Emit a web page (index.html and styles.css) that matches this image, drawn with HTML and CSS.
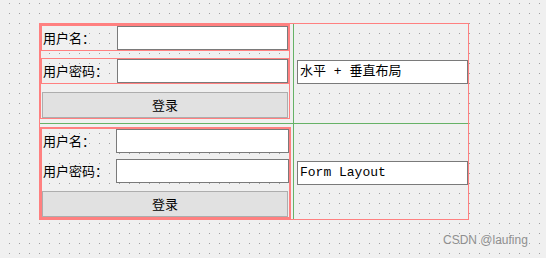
FILE: index.html
```html
<!DOCTYPE html>
<html>
<head>
<meta charset="utf-8">
<link rel="stylesheet" href="styles.css">
</head>
<body>
<div class="frame">
  <div class="cell tl">
    <div class="vbox">
      <div class="hrow"><span class="lbl">用户名：</span><div class="field"></div></div>
      <div class="hrow r2"><span class="lbl">用户密码：</span><div class="field"></div></div>
      <div class="btn">登录</div>
    </div>
  </div>
  <div class="cell tr"><div class="field wide t1">水平 + 垂直布局</div></div>
  <div class="cell bl">
    <div class="form">
      <div class="frow"><span class="lbl">用户名：</span><div class="field f2"></div></div>
      <div class="frow fr2"><span class="lbl">用户密码：</span><div class="field f2"></div></div>
      <div class="btn fbtn">登录</div>
    </div>
  </div>
  <div class="cell br"><div class="field wide t2">Form Layout</div></div>
</div>
<div class="wm">CSDN @laufing</div>
</body>
</html>
```

FILE: styles.css
```css
html, body {
  margin: 0;
  height: 100%;
}
body {
  background-color: #f0f0f0;
  background-image:
    linear-gradient(90deg, #f0f0f0 9px, transparent 9px),
    linear-gradient(#f0f0f0 9px, #a0a0a0 9px);
  background-size: 10px 10px;
  background-position: 0 -6px;
  font-family: "Liberation Mono", "Noto Sans CJK SC", monospace;
  font-size: 13px;
  color: #000;
  position: relative;
  overflow: hidden;
}
.frame {
  margin: 23px 0 0 39px;
  width: 430px;
  height: 197px;
  box-sizing: border-box;
  border: 1px solid #ff8080;
  display: grid;
  grid-template-columns: 253px 175px;
  grid-template-rows: 99px 96px;
}
.cell {
  box-sizing: border-box;
  min-width: 0;
}
.tr, .br {
  border-left: 1px solid #66b266;
}
.bl, .br {
  border-top: 1px solid #66b266;
}
.vbox {
  width: 250px;
  height: 95px;
  box-sizing: border-box;
  border: 1px solid #ff8080;
  display: flex;
  flex-direction: column;
}
.hrow {
  height: 26px;
  box-sizing: border-box;
  border: 1px solid #ff8080;
  display: flex;
  align-items: center;
}
.r2 {
  margin-top: 7px;
}
.lbl {
  font-family: "Noto Sans CJK SC", sans-serif;
  font-size: 13px;
  padding-left: 1px;
  line-height: 16px;
  white-space: nowrap;
}
.field {
  margin-left: auto;
  width: 171px;
  height: 24px;
  box-sizing: border-box;
  background: #fff;
  border: 1px solid #7a7a7a;
  padding-left: 2px;
  line-height: 22px;
  white-space: pre;
  font-family: "Liberation Mono", "Noto Sans CJK SC", monospace;
  font-size: 13px;
}
.btn {
  margin: 8px 1px 0 1px;
  height: 26px;
  box-sizing: border-box;
  background: #e1e1e1;
  border: 1px solid #adadad;
  text-align: center;
  line-height: 24px;
  font-family: "Noto Sans CJK SC", sans-serif;
  font-size: 13px;
}
.wide {
  margin-left: 3px;
}
.t1 {
  margin-top: 36px;
}
.t2 {
  margin-top: 37px;
}
.form {
  margin-top: 3px;
  width: 251px;
  height: 92px;
  box-sizing: border-box;
  border: 2px solid #ff8080;
  display: flex;
  flex-direction: column;
}
.frow {
  height: 24px;
  display: flex;
  align-items: center;
}
.fr2 {
  margin-top: 6px;
}
.f2 {
  width: 173px;
}
.fbtn {
  margin: 8px 1px 0 0;
}
.wm {
  position: absolute;
  left: 443px;
  top: 233px;
  font-family: "Liberation Sans", sans-serif;
  font-size: 12px;
  line-height: 14px;
  color: #8f8f8f;
}
```
